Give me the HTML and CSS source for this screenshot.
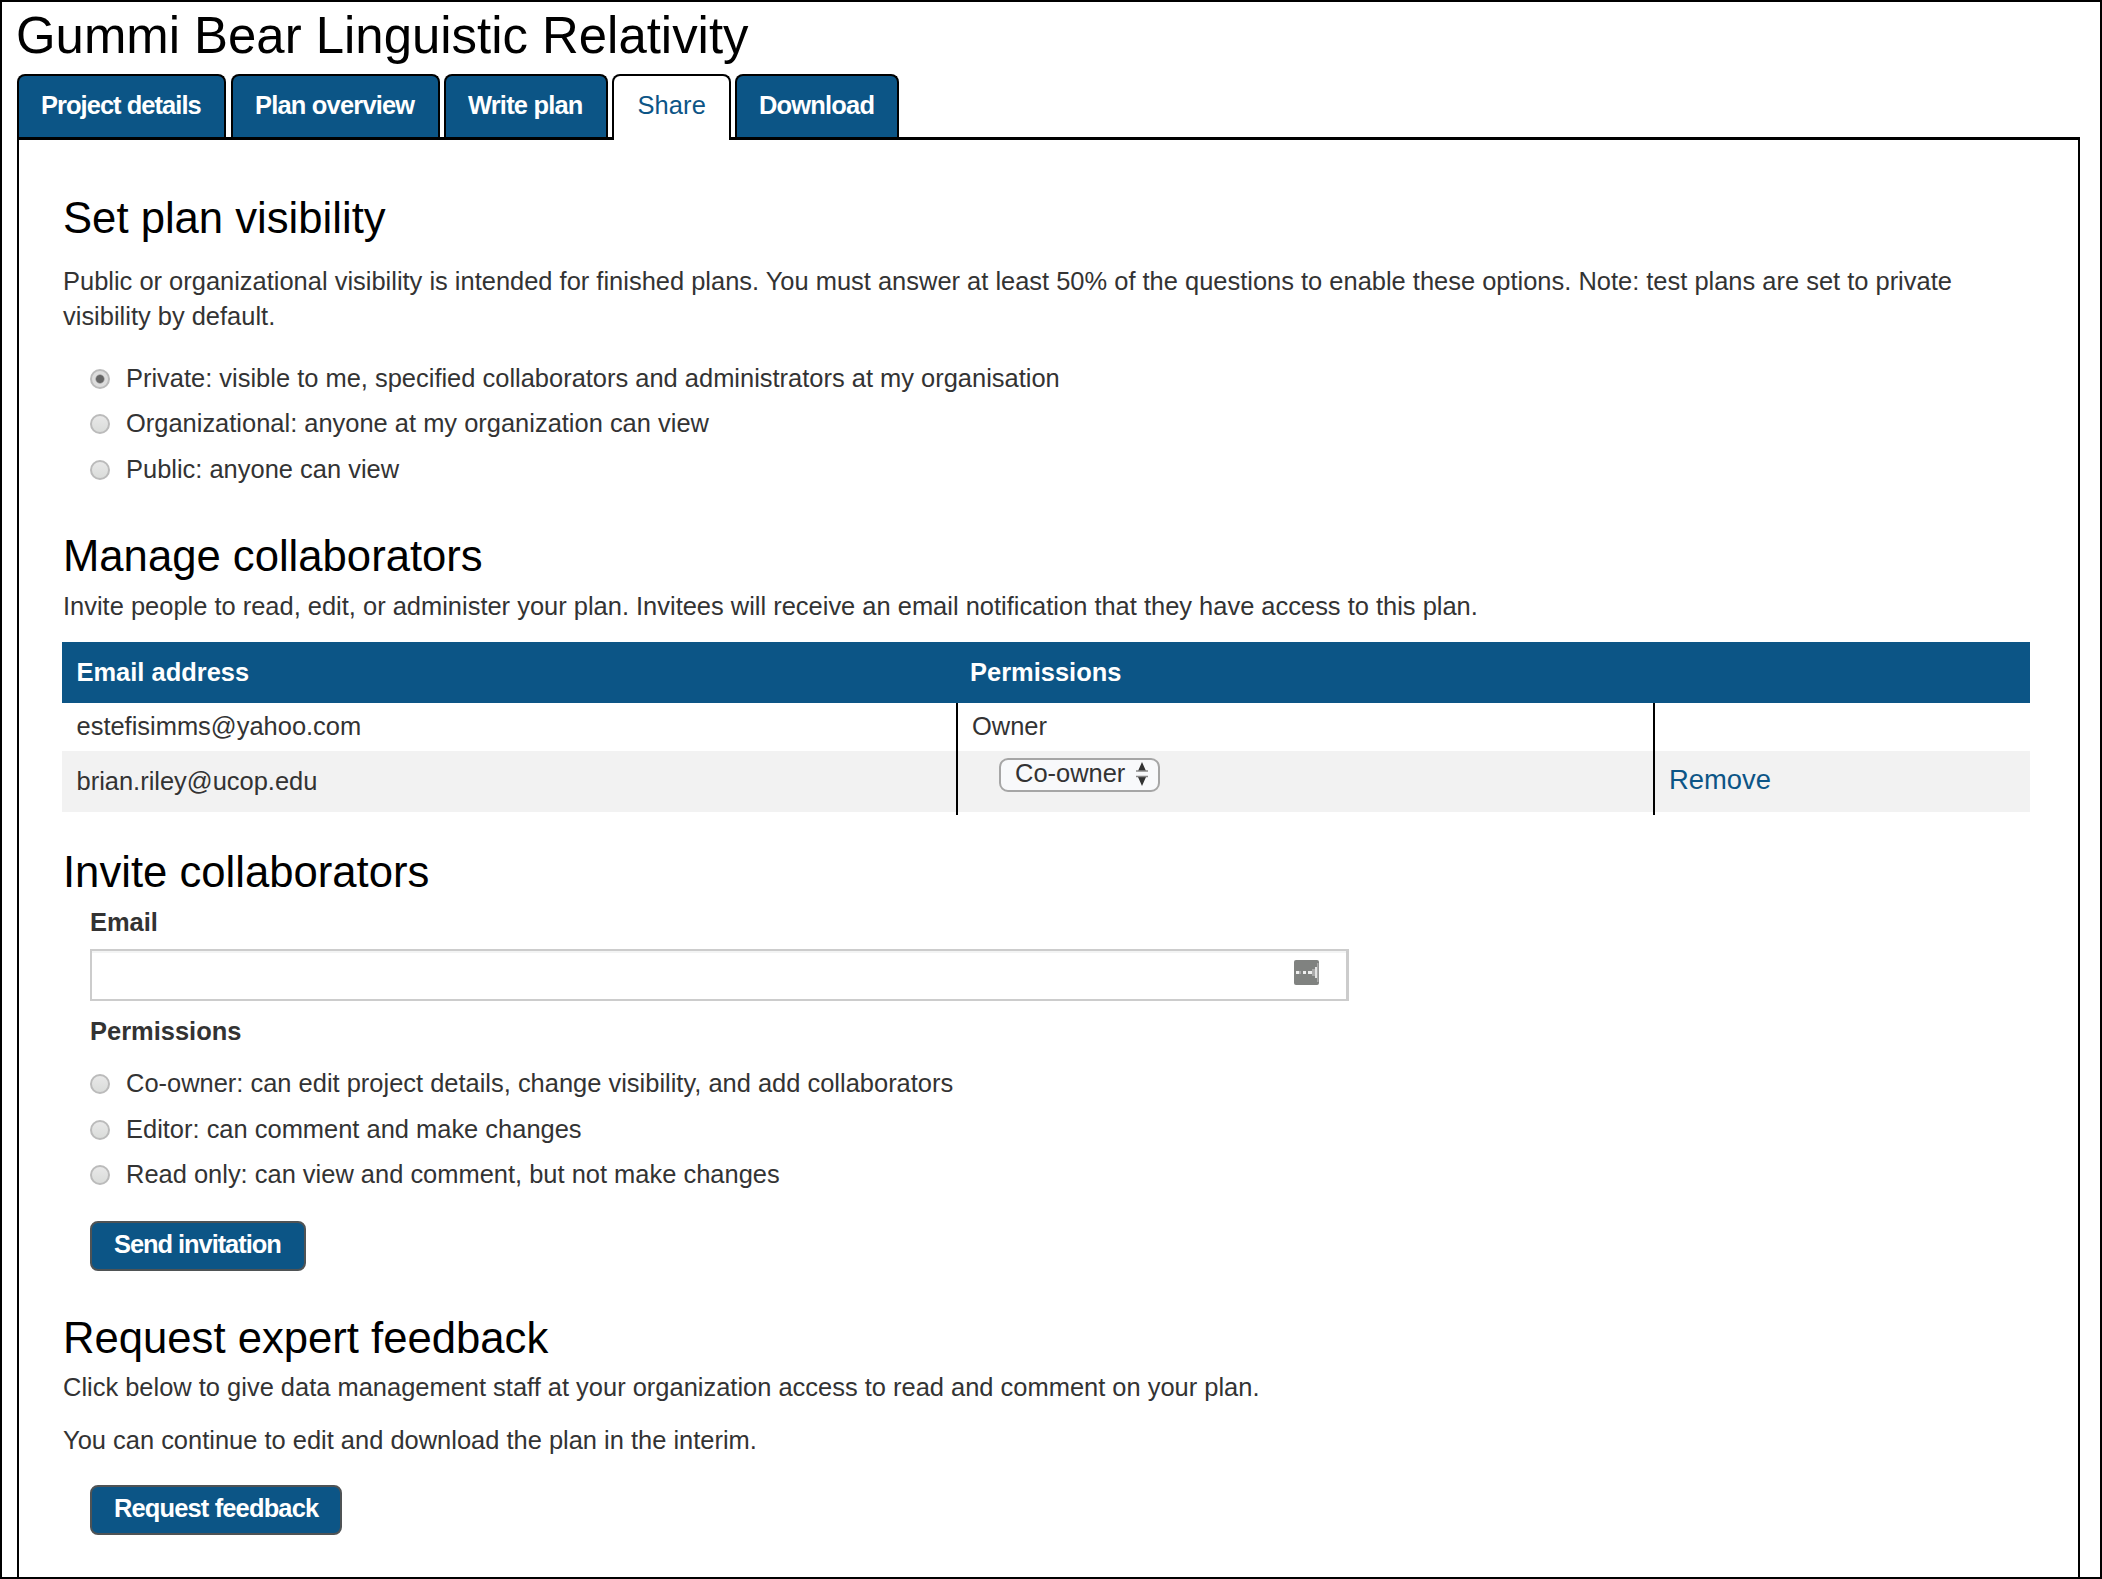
FILE: index.html
```html
<!DOCTYPE html>
<html lang="en">
<head>
<meta charset="utf-8">
<title>Gummi Bear Linguistic Relativity</title>
<link rel="stylesheet" href="styles.css">
</head>
<body>
<div class="page">
  <h1 class="page-title">Gummi Bear Linguistic Relativity</h1>
  <nav class="tabs">
    <a class="tab tab-wide tab-first">Project details</a>
    <a class="tab tab-wide tab-second">Plan overview</a>
    <a class="tab">Write plan</a>
    <a class="tab tab-active">Share</a>
    <a class="tab">Download</a>
  </nav>
  <main class="panel">
    <section class="visibility">
      <h2>Set plan visibility</h2>
      <p class="intro">Public or organizational visibility is intended for finished plans. You must answer at least 50% of the questions to enable these options. Note: test plans are set to private visibility by default.</p>
      <div class="options">
        <label class="option"><span class="radio radio-checked"></span>Private: visible to me, specified collaborators and administrators at my organisation</label>
        <label class="option"><span class="radio"></span>Organizational: anyone at my organization can view</label>
        <label class="option"><span class="radio"></span>Public: anyone can view</label>
      </div>
    </section>
    <section class="manage">
      <h2>Manage collaborators</h2>
      <p>Invite people to read, edit, or administer your plan. Invitees will receive an email notification that they have access to this plan.</p>
      <div class="table">
        <div class="row row-head"><div>Email address</div><div>Permissions</div><div></div></div>
        <div class="row"><div>estefisimms@yahoo.com</div><div>Owner</div><div></div></div>
        <div class="row row-alt">
          <div>brian.riley@ucop.edu</div>
          <div><span class="select">Co-owner<svg class="select-arrows" width="12" height="24" viewBox="0 0 12 24"><path d="M6 0 10 9H2zM6 24 2 15h8z" fill="#333"/><path d="M0 9h12M0 14.500h12" stroke="#888" stroke-width="1.500"/></svg></span></div>
          <div class="last-cell"><a class="remove">Remove</a></div>
        </div>
      </div>
    </section>
    <section class="invite">
      <h2>Invite collaborators</h2>
      <div class="form">
        <div class="label">Email</div>
        <div class="input">
          <svg class="autofill" width="25" height="25" viewBox="0 0 25 25"><rect width="25" height="25" rx="2" fill="#808280"/><path d="M2 11h3v3H2zM9 11h3v3H9zM14 11h4v3h-4z" fill="#eee"/><path d="M5 11h2v3H5zM18 9h3v7h-3z" fill="#aaa"/><path d="M21 7h2v11h-2z" fill="#e4e4e4"/><path d="M23 3h1.500v19H23z" fill="#aaa"/></svg>
        </div>
        <div class="label label-permissions">Permissions</div>
        <div class="options">
          <label class="option"><span class="radio"></span>Co-owner: can edit project details, change visibility, and add collaborators</label>
          <label class="option"><span class="radio"></span>Editor: can comment and make changes</label>
          <label class="option"><span class="radio"></span>Read only: can view and comment, but not make changes</label>
        </div>
        <button class="button button-send">Send invitation</button>
      </div>
    </section>
    <section class="feedback">
      <h2>Request expert feedback</h2>
      <p>Click below to give data management staff at your organization access to read and comment on your plan.</p>
      <p class="note">You can continue to edit and download the plan in the interim.</p>
      <button class="button button-request">Request feedback</button>
    </section>
  </main>
</div>
</body>
</html>
```
FILE: styles.css
```css
* { box-sizing: border-box; }
body {
  margin: 0;
  background: #fff;
  color: #333;
  font-family: "Liberation Sans", Arial, sans-serif;
  font-size: 25.46px;
  line-height: 34.5px;
}
h1, h2, p { margin: 0; }
.page {
  display: flex;
  flex-direction: column;
  width: 2102px;
  height: 1579px;
  padding: 4px 20px 0 15px;
  border: 2px solid #000;
  overflow: hidden;
}
.page-title {
  margin-left: -1px;
  color: #000;
  font-size: 50.9px;
  font-weight: 400;
  line-height: 60px;
}
.tabs {
  display: flex;
  gap: 4px;
  margin-top: 8px;
}
.tab {
  width: 164px;
  height: 63px;
  padding: 12px 0 0 22px;
  border: 2px solid #000;
  border-bottom: 0;
  border-radius: 8px 8px 0 0;
  background: #0c5586;
  color: #fff;
  font-weight: 700;
  line-height: 35px;
  letter-spacing: -0.8px;
  white-space: nowrap;
}
.tab-wide { width: 209px; }
.tab-first { letter-spacing: -0.95px; }
.tab-second { margin-left: 1px; }
.tab-active {
  width: 119px;
  height: 66px;
  margin-bottom: -3px;
  padding-left: 23.5px;
  background: #fff;
  color: #0c5586;
  font-weight: 400;
  letter-spacing: 0.1px;
  z-index: 1;
}
.panel {
  flex: 1;
  padding: 53px 48px 0 43px;
  border: 2px solid #000;
  border-top-width: 3px;
  border-bottom: 0;
}
h2 {
  margin-left: 1px;
  color: #000;
  font-size: 43.65px;
  font-weight: 400;
  line-height: 48px;
}
.panel p { margin-left: 1px; }
.panel .intro { margin: 23px 0 22px 1px; }
.visibility h2 { line-height: 49px; margin-bottom: -1px; }
.option {
  display: flex;
  align-items: center;
  gap: 16px;
  height: 45.5px;
}
.visibility .options { margin-left: 28px; }
.radio {
  width: 20px;
  height: 20px;
  margin-top: 2px;
  border: 2px solid #bbb;
  border-radius: 50%;
  background: linear-gradient(#e8e8e8, #dadcda);
}
.radio-checked {
  background: radial-gradient(circle, #666 0 3.5px, #ddd 5px);
}
.manage { padding-top: 40px; }
.manage p { margin-top: 9.5px; }
.table { margin-top: 18.5px; }
.row {
  display: grid;
  grid-template-columns: 894px 697px 377px;
  height: 48px;
}
.row > div {
  display: flex;
  align-items: center;
  padding: 0 0 2px 14px;
  border-left: 2px solid #000;
}
.row > div:first-child {
  padding-left: 14.5px;
  border-left: 0;
}
.row-head {
  height: 61px;
  background: #0c5586;
  color: #fff;
  font-weight: 700;
}
.row-head > div { border-left: 0; padding-bottom: 1px; }
.row-alt { height: 61px; background: #f2f2f2; }
.row-alt > div:first-child { padding-bottom: 3px; }
.row-alt > .last-cell {
  height: 64px;
  padding: 0 0 5px 14px;
}
.select {
  display: flex;
  align-items: center;
  gap: 11px;
  width: 161px;
  height: 34px;
  margin: 0 0 11px 27px;
  padding: 0 0 2px 14px;
  border: 2px solid #a6a6a6;
  border-radius: 9px;
  background: #f8f9fb;
  position: relative;
  top: -2px;
}
.remove { color: #0c5586; font-size: 27.4px; }
.invite { padding-top: 36px; }
.form { margin-left: 28px; }
.label {
  margin-top: 9px;
  font-weight: 700;
}
.input {
  display: flex;
  justify-content: flex-end;
  width: 1259px;
  height: 52px;
  margin-top: 9.5px;
  padding: 9px 27px 0 0;
  border: 2px solid #ccc;
  border-right-width: 3px;
  box-shadow: inset 0 2px #f3f4f4;
}
.label-permissions { margin-top: 13px; }
.form .options { margin-top: 12px; }
.button {
  display: block;
  height: 50px;
  padding: 0 0 3px 22px;
  border: 2px solid #4f5355;
  border-radius: 8px;
  background: #0c5586;
  color: #fff;
  font: 700 25.46px "Liberation Sans", Arial, sans-serif;
  letter-spacing: -0.85px;
  text-align: left;
  white-space: nowrap;
}
.button-send { width: 216px; margin-top: 24px; letter-spacing: -1.05px; }
.button-request { width: 252px; margin: 27.5px 0 0 28px; }
.feedback { padding-top: 43px; }
.feedback p { margin-top: 8px; }
.feedback .note { margin-top: 18.5px; }
```
